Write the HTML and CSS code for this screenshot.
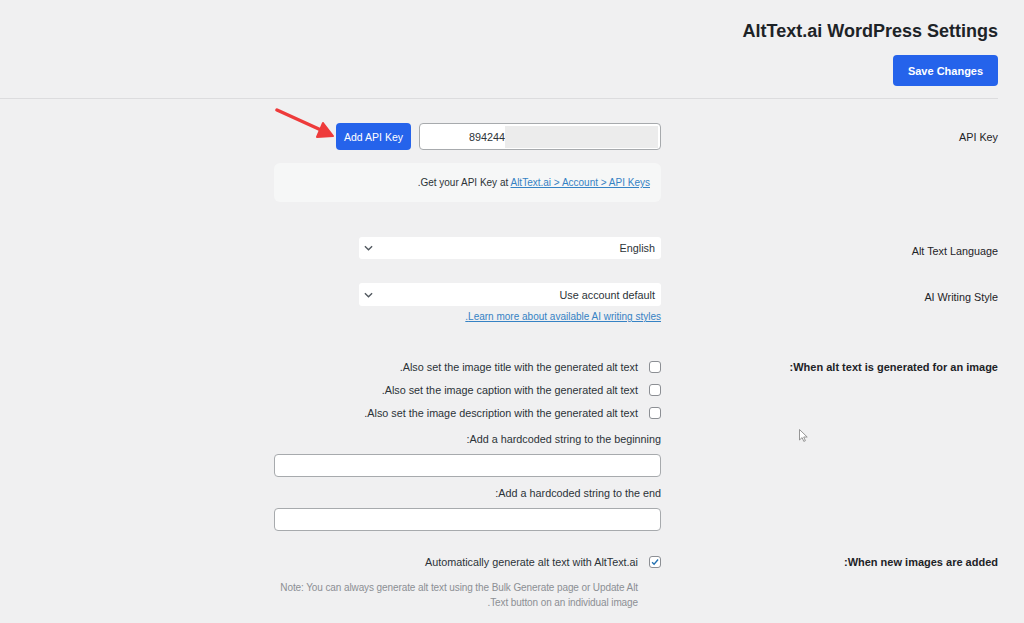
FILE: index.html
```html
<!DOCTYPE html>
<html lang="en" dir="rtl">
<head>
<meta charset="UTF-8">
  <title>AltText.ai WordPress Settings</title>
  <link rel="stylesheet" href="styles.css">
</head>
<body>
  <div class="wrap">
    <div class="page-header">
      <h1>AltText.ai WordPress Settings</h1>
      <button class="btn save-btn">Save Changes</button>
    </div>

    <!-- API key -->
    <div class="form-row row-api">
      <div class="row-label">API Key</div>
      <div class="row-field">
        <div class="api-line">
          <div class="key-input"><span>894244</span><span class="key-blur"></span></div>
          <button class="btn add-btn">Add API Key</button>
          <svg class="hint-arrow" viewBox="0 0 64 32" width="64" height="32">
            <line x1="3" y1="2" x2="47" y2="22" stroke="#ee3b3b" stroke-width="3.5" stroke-linecap="round" />
            <polygon points="59,28 43,29 49,15" fill="#ee3b3b" stroke="#ee3b3b" stroke-width="2" stroke-linejoin="round" />
          </svg>
        </div>
        <div class="help-box">
          <span>Get your API Key at <a href="#">AltText.ai &gt; Account &gt; API Keys</a>.</span>
        </div>
      </div>
    </div>

    <div class="form-row row-lang">
      <div class="row-label">Alt Text Language</div>
      <div class="row-field">
        <div class="select">
          <span>English</span>
          <svg class="chevron" viewBox="0 0 10 6" width="9" height="6"><path d="M1 1l4 4 4-4" fill="none" stroke="#50575e" stroke-width="1.5" /></svg>
        </div>
      </div>
    </div>

    <div class="form-row row-style">
      <div class="row-label">AI Writing Style</div>
      <div class="row-field">
        <div class="select">
          <span>Use account default</span>
          <svg class="chevron" viewBox="0 0 10 6" width="9" height="6"><path d="M1 1l4 4 4-4" fill="none" stroke="#50575e" stroke-width="1.5" /></svg>
        </div>
        <a href="#" class="style-link">Learn more about available AI writing styles.</a>
      </div>
    </div>

    <div class="form-row row-generated">
      <div class="row-label bold">When alt text is generated for an image:</div>
      <div class="row-field">
        <label class="check-row"><span class="check"></span>Also set the image title with the generated alt text.</label>
        <label class="check-row"><span class="check"></span>Also set the image caption with the generated alt text.</label>
        <label class="check-row"><span class="check"></span>Also set the image description with the generated alt text.</label>
        <div class="field-label first">Add a hardcoded string to the beginning:</div>
        <div class="text-input"></div>
        <div class="field-label">Add a hardcoded string to the end:</div>
        <div class="text-input"></div>
      </div>
    </div>

    <div class="form-row row-new">
      <div class="row-label bold">When new images are added:</div>
      <div class="row-field">
        <label class="check-row"><span class="check checked"><svg viewBox="0 0 12 12" width="10" height="10"><path d="M2.5 6.2l2.4 2.4 4.8-5.6" fill="none" stroke="#2271b1" stroke-width="1.6" /></svg></span>Automatically generate alt text with AltText.ai</label>
        <p class="note">Note: You can always generate alt text using the Bulk Generate page or Update Alt Text button on an individual image.</p>
      </div>
    </div>
  </div>

  <svg class="cursor" viewBox="0 0 9 13" width="9" height="13"><path d="M0.5 0.5v10.5l2.6-2.4 1.7 3.8 1.6-0.7-1.7-3.7h3.5z" fill="#fff" stroke="#8a8a8a" stroke-width="0.9" /></svg>
</body>
</html>
```

FILE: styles.css
```css
body {
  margin: 0;
  background: #f0f0f1;
  direction: rtl;
  font-family: "Liberation Sans", Arial, sans-serif;
  font-size: 10.8px;
  color: #2c3338;
}

.wrap {
  margin-right: 26px;
}

.page-header {
  display: flex;
  flex-direction: column;
  align-items: flex-start;
  padding-top: 20px;
  padding-bottom: 12px;
  border-bottom: 1px solid #dcdcde;
}

.page-header h1 {
  margin: 0;
  font-size: 18px;
  line-height: 22px;
  font-weight: 700;
  color: #1d2327;
}

.btn {
  border: none;
  border-radius: 4px;
  background: #2563eb;
  color: white;
  font-family: inherit;
  cursor: pointer;
  padding: 0;
}

.save-btn {
  margin-top: 13px;
  width: 105px;
  height: 31px;
  font-size: 11px;
  font-weight: 700;
}

.form-row {
  display: grid;
  grid-template-columns: 337px 387px;
}

.row-label {
  padding-top: 6px;
  line-height: 16px;
  color: #1d2327;
}

.row-label.bold {
  font-weight: 700;
  font-size: 11px;
  padding-top: 4px;
}

/* API key */
.row-api {
  margin-top: 24px;
}

.api-line {
  position: relative;
  display: flex;
  gap: 8px;
}

.key-input {
  box-sizing: border-box;
  width: 242px;
  height: 27px;
  background: white;
  border: 1px solid #a7aaad;
  border-radius: 4px;
  display: flex;
  direction: ltr;
  justify-content: flex-end;
  align-items: center;
  padding-right: 2px;
  color: #2c3338;
}

.key-blur {
  width: 153px;
  height: 22px;
  background: #ececec;
}

.add-btn {
  width: 75px;
  height: 27px;
  font-size: 10.5px;
}

.hint-arrow {
  position: absolute;
  left: 0;
  top: -15px;
}

.help-box {
  margin-top: 13px;
  height: 39px;
  box-sizing: border-box;
  background: #f6f7f7;
  border-radius: 6px;
  padding-right: 11px;
  font-size: 10px;
  display: flex;
  align-items: center;
}

.help-box a,
.style-link {
  color: #3582c4;
  text-decoration: underline;
}

/* selects */
.row-lang {
  margin-top: 35px;
}

.row-style {
  margin-top: 24px;
}

.select {
  box-sizing: border-box;
  width: 302px;
  height: 22px;
  background: white;
  border-radius: 3px;
  display: flex;
  justify-content: space-between;
  align-items: center;
  padding: 0 6px 0 5px;
}

.row-style .select {
  height: 23px;
}

.style-link {
  display: block;
  margin-top: 3px;
  line-height: 16px;
  font-size: 10px;
}

/* checkboxes */
.row-generated {
  margin-top: 30px;
}

.check-row {
  height: 23px;
  display: flex;
  align-items: center;
  gap: 11px;
}

.check {
  box-sizing: border-box;
  width: 12px;
  height: 12px;
  border: 1px solid #8c8f94;
  border-radius: 3px;
  background: white;
  display: flex;
  align-items: center;
  justify-content: center;
}

.field-label {
  margin-top: 8px;
  margin-bottom: 7px;
  line-height: 16px;
}

.field-label.first {
  margin-top: 7px;
}

.text-input {
  box-sizing: border-box;
  height: 23px;
  background: white;
  border: 1px solid #a7aaad;
  border-radius: 4px;
}

.row-new {
  margin-top: 19px;
}

.note {
  margin: 7px 23px 0 0;
  line-height: 15px;
  font-size: 10px;
  letter-spacing: -0.1px;
  color: #8c8f94;
}

.cursor {
  position: absolute;
  left: 799px;
  top: 429px;
}
```
